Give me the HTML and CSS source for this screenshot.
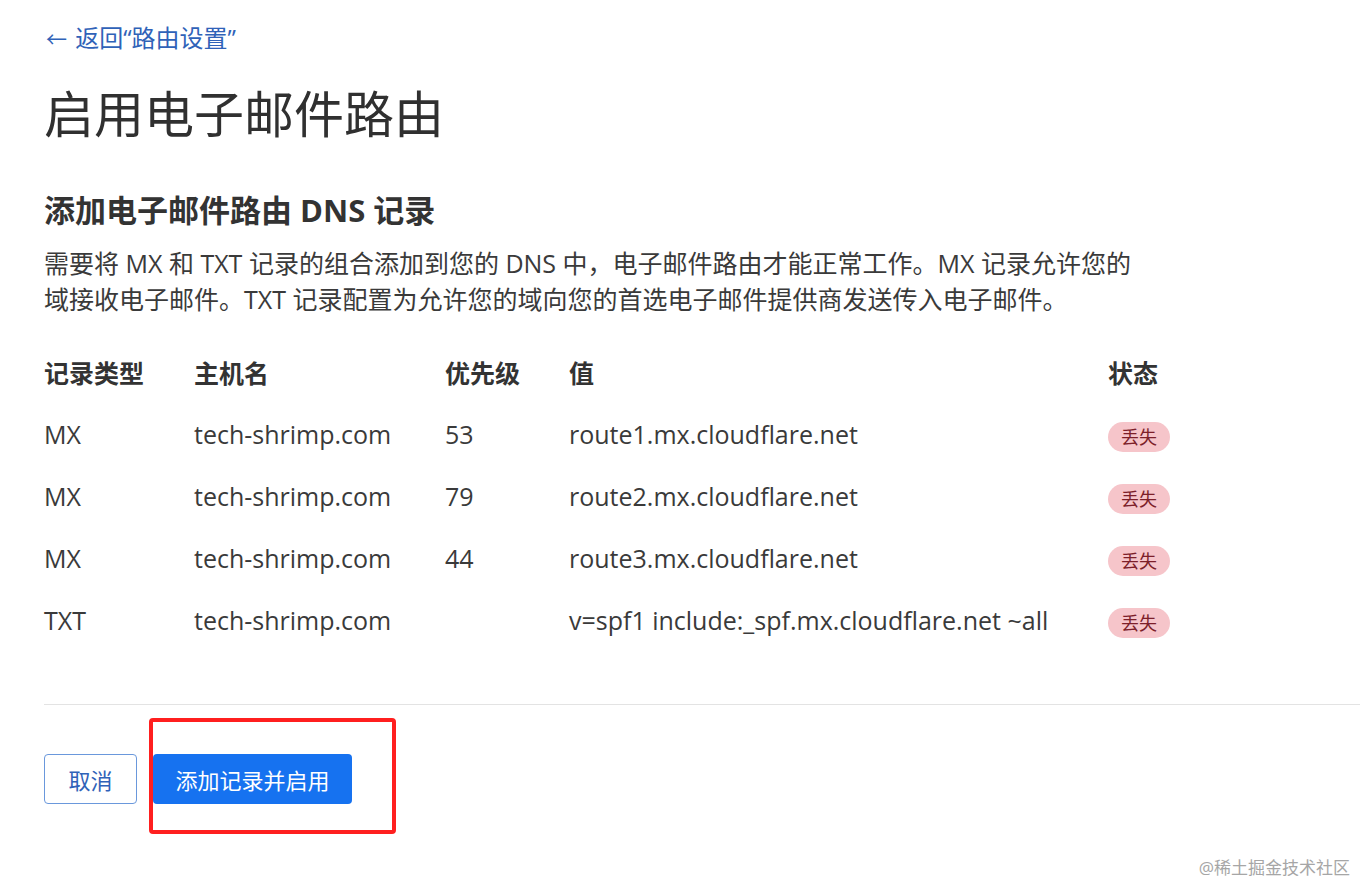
FILE: index.html
```html
<!DOCTYPE html>
<html lang="zh-CN">
<head>
    <meta charset="UTF-8">
    <title>启用电子邮件路由</title>
    <link rel="stylesheet" href="styles.css">
</head>
<body>
    <div class="page">
        <a class="back-link" href="#"><span class="arrow">←</span> 返回“路由设置”</a>
        <h1>启用电子邮件路由</h1>

        <h2>添加电子邮件路由 DNS 记录</h2>
        <p class="intro">需要将 MX 和 TXT 记录的组合添加到您的 DNS 中，电子邮件路由才能正常工作。MX 记录允许您的域接收电子邮件。TXT 记录配置为允许您的域向您的首选电子邮件提供商发送传入电子邮件。</p>

        <table class="records">
            <thead>
                <tr>
                    <th class="col-type">记录类型</th>
                    <th class="col-host">主机名</th>
                    <th class="col-prio">优先级</th>
                    <th class="col-value">值</th>
                    <th>状态</th>
                </tr>
            </thead>
            <tbody>
                <tr>
                    <td>MX</td>
                    <td>tech-shrimp.com</td>
                    <td>53</td>
                    <td>route1.mx.cloudflare.net</td>
                    <td><span class="badge">丢失</span></td>
                </tr>
                <tr>
                    <td>MX</td>
                    <td>tech-shrimp.com</td>
                    <td>79</td>
                    <td>route2.mx.cloudflare.net</td>
                    <td><span class="badge">丢失</span></td>
                </tr>
                <tr>
                    <td>MX</td>
                    <td>tech-shrimp.com</td>
                    <td>44</td>
                    <td>route3.mx.cloudflare.net</td>
                    <td><span class="badge">丢失</span></td>
                </tr>
                <tr>
                    <td>TXT</td>
                    <td>tech-shrimp.com</td>
                    <td></td>
                    <td>v=spf1 include:_spf.mx.cloudflare.net ~all</td>
                    <td><span class="badge">丢失</span></td>
                </tr>
            </tbody>
        </table>

        <div class="divider"></div>

        <div class="actions">
            <button class="btn btn-outline">取消</button>
            <div class="highlight">
                <button class="btn btn-primary">添加记录并启用</button>
            </div>
        </div>
    </div>

    <div class="watermark">@稀土掘金技术社区</div>
</body>
</html>
```

FILE: styles.css
```css
body {
    margin: 0;
    font-family: "Open Sans", "Noto Sans CJK SC", sans-serif;
    color: #333;
    background: #fff;
}
.page {
    padding: 22px 0 40px 44px;
}
.back-link {
    display: inline-block;
    color: #2f62b8;
    font-size: 24px;
    line-height: 32px;
    text-decoration: none;
}
.back-link .arrow {
    font-size: 21px;
    margin-left: 2px;
    margin-right: 2px;
}
h1 {
    margin: 27px 0 0;
    font-size: 50px;
    font-weight: 400;
    line-height: 64px;
    color: #303030;
}
h2 {
    margin: 44px 0 0;
    font-size: 31px;
    font-weight: 700;
    line-height: 40px;
    color: #333;
}
.intro {
    margin: 15px 0 0;
    max-width: 1105px;
    font-size: 25px;
    line-height: 36px;
    color: #3a3a3a;
}
.records {
    margin-top: 24px;
    border-collapse: collapse;
    font-size: 25px;
    color: #3a3a3a;
}
.records th {
    text-align: left;
    font-weight: 700;
    height: 62px;
    padding: 0;
    color: #333;
}
.records td {
    height: 62px;
    padding: 0;
}
.col-type {
    width: 150px;
}
.col-host {
    width: 251px;
}
.col-prio {
    width: 124px;
}
.col-value {
    width: 539px;
}
.badge {
    display: inline-block;
    padding: 0 13px;
    height: 30px;
    line-height: 30px;
    border-radius: 15px;
    background: #f6c5ca;
    color: #7d1f2a;
    font-size: 18px;
}
.divider {
    margin-top: 53px;
    border-top: 1px solid #e3e3e3;
}
.actions {
    display: flex;
    align-items: flex-start;
    gap: 12px;
    margin-top: 13px;
}
.btn {
    height: 50px;
    border-radius: 4px;
    font-family: inherit;
    font-size: 22px;
    cursor: pointer;
}
.btn-outline {
    margin-top: 36px;
    width: 93px;
    background: #fff;
    border: 1px solid #6a98dc;
    color: #2f62b8;
}
.btn-primary {
    width: 199px;
    background: #1672f0;
    border: none;
    color: #fff;
}
.highlight {
    display: flex;
    padding: 32px 40px 26px 0;
    border: 4px solid #ff1f1f;
    border-radius: 4px;
}
.watermark {
    position: absolute;
    right: 10px;
    top: 854px;
    font-size: 17px;
    color: #a6a6a6;
}
```
